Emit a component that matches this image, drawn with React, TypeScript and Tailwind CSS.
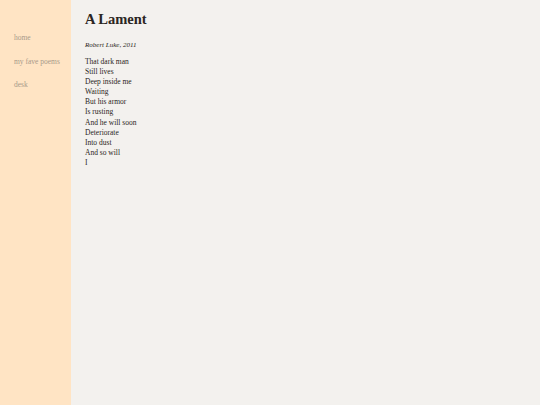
import React from "react";

const lines = [
  "That dark man",
  "Still lives",
  "Deep inside me",
  "Waiting",
  "But his armor",
  "Is rusting",
  "And he will soon",
  "Deteriorate",
  "Into dust",
  "And so will",
  "I",
];

export default function App() {
  return (
    <div
      className="flex min-h-[405px] w-full"
      style={{ fontFamily: '"Liberation Serif", "DejaVu Serif", serif' }}
    >
      {/* sidebar */}
      <nav className="w-[71px] shrink-0 bg-[#ffe4c4] pl-[14px] pt-[33px]">
        <ul className="flex flex-col gap-[14px] text-[7.5px] leading-[9.5px] text-[#a89a8a]">
          <li>home</li>
          <li>my fave poems</li>
          <li>desk</li>
        </ul>
      </nav>

      {/* content */}
      <main className="flex-1 bg-[#f3f1ee] pl-[14px] pt-[10px] text-[#2a2522]">
        <h1 className="text-[14.5px] font-bold leading-[18px]">A Lament</h1>
        <p className="mt-[13px] text-[7px] italic leading-[9px]">Robert Luke, 2011</p>
        <div className="mt-[7px] text-[7.5px] leading-[10.1px]">
          {lines.map((l, i) => (
            <div key={i}>{l}</div>
          ))}
        </div>
      </main>
    </div>
  );
}
